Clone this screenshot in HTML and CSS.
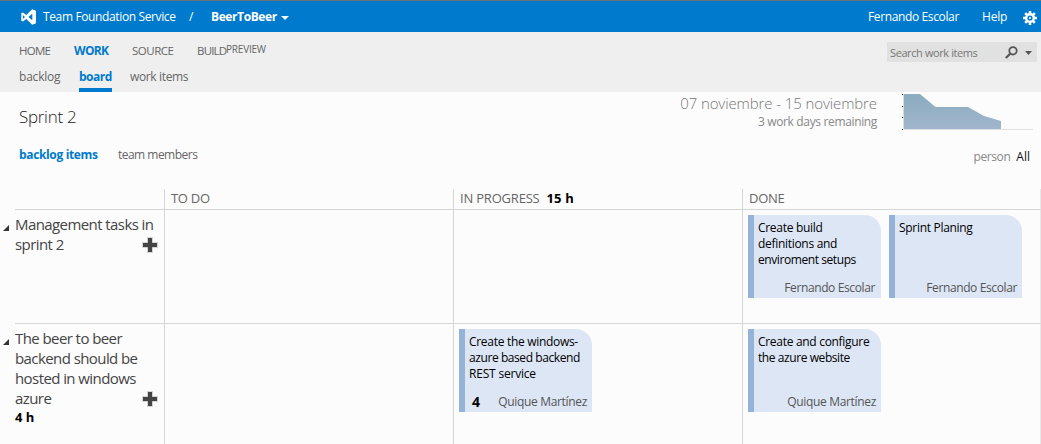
FILE: index.html
```html
<!DOCTYPE html>
<html lang="en">
<head>
<meta charset="utf-8">
<title>Sprint 2 - Board</title>
<link rel="stylesheet" href="styles.css">
</head>
<body>
<header class="topbar">
  <svg class="logo" width="16" height="16" viewBox="0 0 16 16"><path fill="#fff" fill-rule="evenodd" d="M11.2 0.3 15 1.8v12.4l-3.8 1.5L5.3 10 2 12.6 0.3 11.7V4.3L2 3.4 5.3 6zM11.3 4.8 7.4 8l3.9 3.2zM1.9 6v4L4 8z"/></svg>
  <span class="service">Team Foundation Service</span>
  <span class="slash">/</span>
  <span class="project">BeerToBeer</span>
  <svg class="project-caret" width="8" height="4" viewBox="0 0 8 4"><path fill="#fff" d="M0 0h8L4 4z"/></svg>
  <span class="user">Fernando Escolar</span>
  <span class="help">Help</span>
  <svg class="gear" width="14" height="14" viewBox="-7 -7 14 14"><g stroke="#fff" stroke-width="2.6"><path d="M0-7V7M-7 0H7M-4.8-4.8 4.8 4.8M4.8-4.8-4.8 4.8"/></g><circle r="5" fill="#fff"/><circle r="2.6" fill="#007acc"/><circle r="1.1" fill="#fff"/></svg>
</header>
<nav class="nav">
  <div class="links">
    <div class="tabs">
      <span class="home">HOME</span><span class="work active">WORK</span><span class="source">SOURCE</span><span class="build">BUILD</span><span class="preview">PREVIEW</span>
    </div>
    <div class="subtabs">
      <span class="backlog">backlog</span><span class="board-tab active">board</span><span class="items">work items</span>
    </div>
  </div>
  <div class="search">
    <span class="search-text">Search work items</span>
    <svg class="lens" width="13" height="13" viewBox="0 0 13 13"><circle cx="8" cy="4.8" r="3.7" fill="none" stroke="#555" stroke-width="1.8"/><path d="M5.4 7.5.8 12" stroke="#555" stroke-width="2.2"/></svg>
    <svg width="7" height="4" viewBox="0 0 7 4"><path fill="#555" d="M0 0h7L3.500 4z"/></svg>
  </div>
</nav>
<section class="heading">
  <h1 class="title">Sprint 2</h1>
  <div class="dates">
    <div class="range">07 noviembre - 15 noviembre</div>
    <div class="remaining">3 work days remaining</div>
  </div>
  <svg class="burndown" width="132" height="38" viewBox="0 0 132 38">
    <defs><linearGradient id="area" x1="0" y1="0" x2="0" y2="1"><stop offset="0" stop-color="#8babbf"/><stop offset="1" stop-color="#a0b6cc"/></linearGradient></defs>
    <path d="M2 36.500H131" stroke="#e0e0e0"/>
    <path fill="url(#area)" d="M2 1H18L33.500 14H66L82 23 99 28V36H2z"/>
    <path d="M1.500 1V36" stroke="#d5dde3"/>
    <path fill="#222" d="M0 1h1v1H0zM0 13h1v1H0zM0 24h1v1H0zM0 36h1v1H0z"/>
  </svg>
</section>
<div class="pivots">
  <span class="backlog-items active">backlog items</span>
  <span class="members">team members</span>
  <span class="person">person</span>
  <span class="all">All</span>
</div>
<main class="board">
  <div class="head"></div>
  <div class="head cell"><span class="h-todo">TO DO</span></div>
  <div class="head cell"><span class="h-progress">IN PROGRESS</span><b class="total">15 h</b></div>
  <div class="head cell last"><span class="h-done">DONE</span></div>

  <div class="story">
    <svg class="toggle" width="6" height="6" viewBox="0 0 6 6"><path fill="#333" d="M6 0v6H0z"/></svg>
    <div class="l1">Management tasks in</div>
    <div class="l2">sprint 2</div>
    <svg class="plus plus-a" width="16" height="16" viewBox="0 0 16 16"><path fill="#444" stroke="#d4d4d4" d="M5.500.5h5v5h5v5h-5v5h-5v-5h-5v-5h5z"/></svg>
  </div>
  <div class="cell"></div>
  <div class="cell"></div>
  <div class="cell last">
    <article class="card">
      <p><span class="c1">Create build</span><span class="c2">definitions and</span><span class="c3">enviroment setups</span></p>
      <footer><span class="fe">Fernando Escolar</span></footer>
    </article>
    <article class="card">
      <p><span class="c4">Sprint Planing</span></p>
      <footer class="near"><span class="fe">Fernando Escolar</span></footer>
    </article>
  </div>

  <div class="story second">
    <svg class="toggle" width="6" height="6" viewBox="0 0 6 6"><path fill="#333" d="M6 0v6H0z"/></svg>
    <div class="l3">The beer to beer</div>
    <div class="l4">backend should be</div>
    <div class="l5">hosted in windows</div>
    <div class="l6">azure</div>
    <b class="hours">4 h</b>
    <svg class="plus plus-b" width="16" height="16" viewBox="0 0 16 16"><path fill="#444" stroke="#d4d4d4" d="M5.500.5h5v5h5v5h-5v5h-5v-5h-5v-5h5z"/></svg>
  </div>
  <div class="cell second"></div>
  <div class="cell second">
    <article class="card">
      <p><span class="c5">Create the windows-</span><span class="c6">azure based backend</span><span class="c7">REST service</span></p>
      <footer class="near"><b>4</b><span class="qm">Quique Martínez</span></footer>
    </article>
  </div>
  <div class="cell last second">
    <article class="card">
      <p><span class="c8">Create and configure</span><span class="c9">the azure website</span></p>
      <footer class="near"><span class="qm">Quique Martínez</span></footer>
    </article>
  </div>
</main>
</body>
</html>
```
FILE: styles.css
```css
* { box-sizing: border-box; }
body {
  margin: 0;
  width: 1041px;
  height: 444px;
  overflow: hidden;
  background: #fcfcfc;
  color: #666;
  font: 12px/16px "Open Sans", "Noto Sans", sans-serif;
  letter-spacing: -0.2px;
  white-space: nowrap;
}
svg { display: block; flex: none; }
span { flex: none; }
.active { color: #007acc; font-weight: 700; }

.topbar {
  display: flex;
  align-items: center;
  height: 32px;
  padding: 1px 4px 0 21px;
  border-top: 1px solid #6b7074;
  background: #007acc;
  color: #fff;
}
.service { width: 134px; margin-left: 6px; letter-spacing: -0.37px; }
.slash { margin-left: 12px; width: 22px; }
.project { width: 65px; font-weight: 700; letter-spacing: -0.4px; }
.project-caret { margin: 1px 0 0 5px; }
.user { width: 91px; margin-left: auto; letter-spacing: -0.37px; }
.help { width: 25px; margin-left: 23px; }
.gear { margin: 1px 0 0 16px; }

.nav {
  display: flex;
  justify-content: space-between;
  height: 60px;
  padding: 10px 4px 0 19px;
  background: #efefef;
}
.tabs, .subtabs { display: flex; }
.tabs { padding-top: 1px; height: 26px; }
.subtabs { height: 24px; line-height: 18px; }
.home { width: 55px; font-size: 11.500px; letter-spacing: -0.75px; }
.work { width: 58px; letter-spacing: -0.65px; }
.source { width: 65px; font-size: 11.500px; letter-spacing: -0.5px; }
.build { width: 29px; font-size: 11.500px; letter-spacing: -0.8px; }
.preview { font-size: 10px; letter-spacing: -0.2px; line-height: 12px; }
.backlog { width: 60px; }
.board-tab { width: 33px; height: 24px; margin-right: 18px; border-bottom: 4px solid #007acc; letter-spacing: -0.5px; }
.items { letter-spacing: -0.35px; }
.search {
  display: flex;
  align-items: center;
  width: 150px;
  height: 20px;
  padding: 1px 6px 0 3px;
  background: #e1e1e1;
  color: #777;
}
.search-text { width: 115px; padding-top: 1px; font-size: 11px; letter-spacing: -0.4px; }
.lens { margin-right: 7px; }

.heading { display: flex; height: 48px; padding: 0 7px 0 19px; }
.title { margin: 13px 0 0; font: 300 17px/24px "Open Sans", sans-serif; letter-spacing: -0.3px; color: #222; }
.dates { margin-left: auto; text-align: right; color: #888; }
.range { margin-top: 2px; font-size: 15px; line-height: 18px; font-weight: 300; letter-spacing: -0.1px; color: #777; }
.remaining { margin-top: 2px; letter-spacing: -0.35px; }
.burndown { margin: 1px 0 0 25px; }

.pivots { display: flex; height: 49px; padding: 7px 11px 0 19px; }
.backlog-items { width: 99px; letter-spacing: -0.35px; }
.members { letter-spacing: -0.52px; }
.person { margin: 2px 6px 0 auto; letter-spacing: -0.4px; color: #888; }
.all { margin-top: 2px; letter-spacing: 0; color: #111; }

.board {
  display: grid;
  grid-template-columns: 149px 289px 289px 299px;
  grid-template-rows: 21px 114px 120px;
  margin-left: 15px;
  width: 1026px;
}
.cell { display: flex; gap: 8px; padding: 5px 0 0 5px; border-left: 1px solid #d6d6d6; border-bottom: 1px solid #d6d6d6; }
.last { border-right: 1px solid #e8e8e8; }
.head { padding: 1px 0 0 6px; border-bottom: 1px solid #d6d6d6; font-size: 13px; line-height: 16px; letter-spacing: -0.3px; }
.h-progress { letter-spacing: -0.2px; }
.total { margin-left: -1px; letter-spacing: 0.15px; color: #000; }
.story { position: relative; padding-top: 4px; border-bottom: 1px solid #d6d6d6; font-size: 15px; line-height: 20px; letter-spacing: -0.58px; color: #444; }
.second { border-bottom: 0; }
.toggle { position: absolute; left: -12px; top: 15px; }
.plus { position: absolute; left: 127px; }
.plus-a { top: 27px; }
.plus-b { top: 67px; }
.hours { display: block; margin-top: 0; font-size: 13px; line-height: 18px; letter-spacing: 0; color: #000; }

.card {
  display: flex;
  flex-direction: column;
  width: 133px;
  height: 83px;
  padding: 5px 5px 2px 4px;
  border-left: 6px solid #95b3d9;
  border-top-right-radius: 16px;
  background: #dce6f5;
  color: #000;
  letter-spacing: -0.3px;
}
.card p { margin: 0; }
.card p span { display: block; }
.card .c3, .card .c6, .card .c9 { letter-spacing: -0.42px; }
.card .c7 { letter-spacing: -0.2px; }
.card footer { display: flex; justify-content: flex-end; margin-top: auto; padding-right: 1px; color: #555; }
.card .near { padding-right: 0; }
.card footer b { margin: 0 auto 0 3px; font-size: 14px; line-height: 15px; color: #000; }
.fe { letter-spacing: -0.38px; }
.qm { letter-spacing: -0.33px; }
```
